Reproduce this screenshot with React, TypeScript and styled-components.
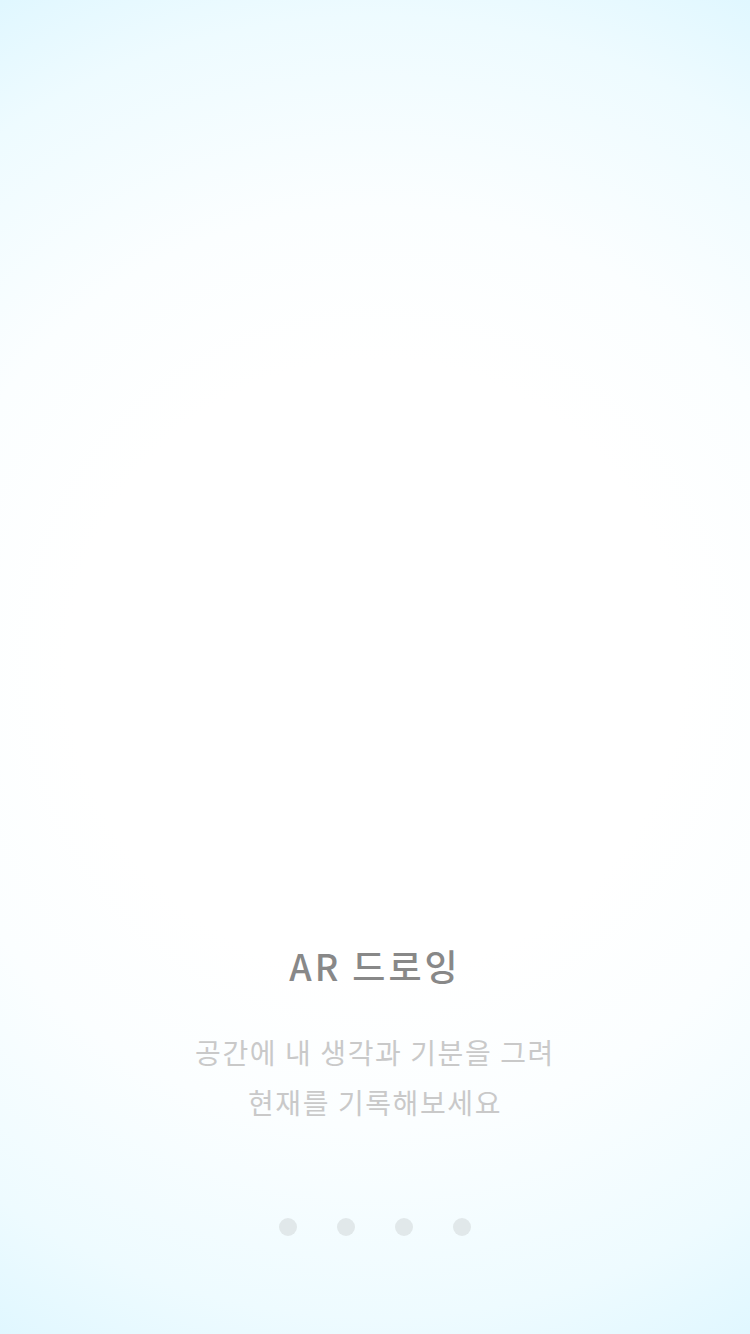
import React from "react";
import styled, { createGlobalStyle } from "styled-components";

const GlobalStyle = createGlobalStyle`
  html, body { margin: 0; padding: 0; }
  body { font-family: "Noto Sans CJK KR", "Noto Sans", sans-serif; }
  * { box-sizing: border-box; }
`;

const Screen = styled.div`
  width: 750px;
  height: 1334px;
  display: flex;
  flex-direction: column;
  justify-content: flex-end;
  align-items: center;
  padding-bottom: 98px;
  background: radial-gradient(circle farthest-corner at 50% 50%, #ffffff 0%, #ffffff 40%, #fbfeff 60%, #eefbff 85%, #e0f7ff 100%);
`;

const Title = styled.h1`
  margin: 0;
  font-size: 36px;
  line-height: 48px;
  font-weight: 500;
  color: #888888;
  letter-spacing: 3px;
`;

const Subtitle = styled.p`
  margin: 38px 0 0;
  font-size: 28px;
  line-height: 50px;
  font-weight: 400;
  color: #c9c9c9;
  text-align: center;
  letter-spacing: 1.6px;
`;

const Dots = styled.div`
  margin-top: 91px;
  display: flex;
  gap: 40px;
`;

const Dot = styled.span<{ $active?: boolean }>`
  width: 18px;
  height: 18px;
  border-radius: 50%;
  background: ${(p) => (p.$active ? "#b8c4c8" : "#e1e8ea")};
`;

export default function App() {
  return (
    <>
      <GlobalStyle />
      <Screen>
        <Title>AR 드로잉</Title>
        <Subtitle>
          공간에 내 생각과 기분을 그려
          <br />
          현재를 기록해보세요
        </Subtitle>
        <Dots>
          {[0, 1, 2, 3].map((i) => (
            <Dot key={i} />
          ))}
        </Dots>
      </Screen>
    </>
  );
}
